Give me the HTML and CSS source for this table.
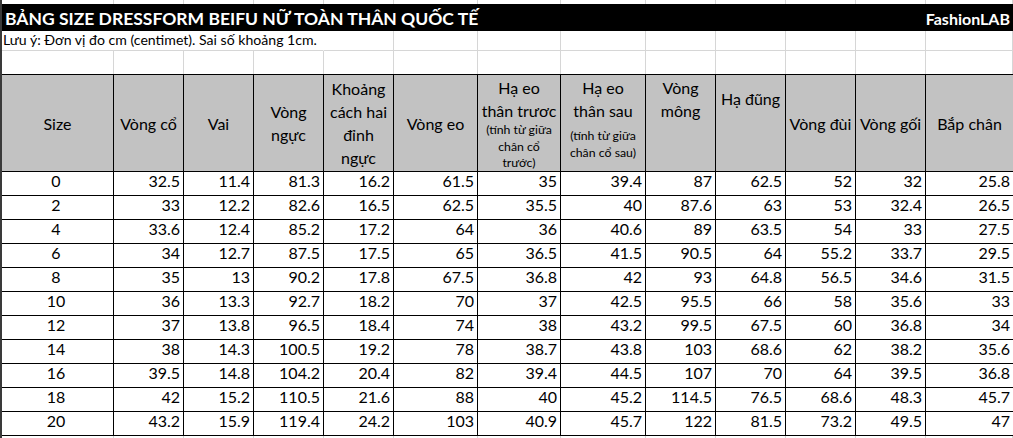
FILE: index.html
```html
<!DOCTYPE html>
<html lang="vi">
<head>
<meta charset="utf-8">
<title>Bảng size dressform Beifu</title>
<link rel="stylesheet" href="styles.css">
</head>
<body>
<div class="sheet">
  <div class="cols row-top">
    <div class="g"></div><div class="g"></div><div class="g"></div><div class="g"></div><div class="g"></div><div class="g"></div><div class="g"></div><div class="g"></div><div class="g"></div><div class="g"></div><div class="g"></div><div class="g"></div><div class="g"></div>
  </div>
  <div class="title-row">
    <h1 class="title">BẢNG SIZE DRESSFORM BEIFU NỮ TOÀN THÂN QUỐC TẾ</h1>
    <span class="brand">FashionLAB</span>
  </div>
  <div class="cols row-note">
    <div class="g note">Lưu ý: Đơn vị đo cm (centimet). Sai số khoảng 1cm.</div><div class="g"></div><div class="g"></div><div class="g"></div><div class="g"></div><div class="g"></div><div class="g"></div><div class="g"></div><div class="g"></div><div class="g"></div>
  </div>
  <div class="cols row-blank">
    <div class="g"></div><div class="g"></div><div class="g"></div><div class="g"></div><div class="g"></div><div class="g"></div><div class="g"></div><div class="g"></div><div class="g"></div><div class="g"></div><div class="g"></div><div class="g"></div><div class="g"></div>
  </div>

  <div class="cols table">
    <div class="th mid">Size</div>
    <div class="th mid">Vòng cổ</div>
    <div class="th mid">Vai</div>
    <div class="th mid">Vòng<br>ngực</div>
    <div class="th mid">Khoảng<br>cách hai<br>đỉnh<br>ngực</div>
    <div class="th mid">Vòng eo</div>
    <div class="th top">Hạ eo<br>thân trươc<span class="small">(tính từ giữa<br>chân cổ<br>trước)</span></div>
    <div class="th top">Hạ eo<br>thân sau<span class="small gap">(tính từ giữa<br>chân cổ sau)</span></div>
    <div class="th top">Vòng<br>mông</div>
    <div class="th top drop">Hạ đũng</div>
    <div class="th mid">Vòng đùi</div>
    <div class="th mid">Vòng gối</div>
    <div class="th mid last">Bắp chân</div>

    <div class="td size">0</div><div class="td">32.5</div><div class="td">11.4</div><div class="td">81.3</div><div class="td">16.2</div><div class="td">61.5</div><div class="td">35</div><div class="td">39.4</div><div class="td">87</div><div class="td">62.5</div><div class="td">52</div><div class="td">32</div><div class="td last">25.8</div>
    <div class="td size">2</div><div class="td">33</div><div class="td">12.2</div><div class="td">82.6</div><div class="td">16.5</div><div class="td">62.5</div><div class="td">35.5</div><div class="td">40</div><div class="td">87.6</div><div class="td">63</div><div class="td">53</div><div class="td">32.4</div><div class="td last">26.5</div>
    <div class="td size">4</div><div class="td">33.6</div><div class="td">12.4</div><div class="td">85.2</div><div class="td">17.2</div><div class="td">64</div><div class="td">36</div><div class="td">40.6</div><div class="td">89</div><div class="td">63.5</div><div class="td">54</div><div class="td">33</div><div class="td last">27.5</div>
    <div class="td size">6</div><div class="td">34</div><div class="td">12.7</div><div class="td">87.5</div><div class="td">17.5</div><div class="td">65</div><div class="td">36.5</div><div class="td">41.5</div><div class="td">90.5</div><div class="td">64</div><div class="td">55.2</div><div class="td">33.7</div><div class="td last">29.5</div>
    <div class="td size">8</div><div class="td">35</div><div class="td">13</div><div class="td">90.2</div><div class="td">17.8</div><div class="td">67.5</div><div class="td">36.8</div><div class="td">42</div><div class="td">93</div><div class="td">64.8</div><div class="td">56.5</div><div class="td">34.6</div><div class="td last">31.5</div>
    <div class="td size">10</div><div class="td">36</div><div class="td">13.3</div><div class="td">92.7</div><div class="td">18.2</div><div class="td">70</div><div class="td">37</div><div class="td">42.5</div><div class="td">95.5</div><div class="td">66</div><div class="td">58</div><div class="td">35.6</div><div class="td last">33</div>
    <div class="td size">12</div><div class="td">37</div><div class="td">13.8</div><div class="td">96.5</div><div class="td">18.4</div><div class="td">74</div><div class="td">38</div><div class="td">43.2</div><div class="td">99.5</div><div class="td">67.5</div><div class="td">60</div><div class="td">36.8</div><div class="td last">34</div>
    <div class="td size">14</div><div class="td">38</div><div class="td">14.3</div><div class="td">100.5</div><div class="td">19.2</div><div class="td">78</div><div class="td">38.7</div><div class="td">43.8</div><div class="td">103</div><div class="td">68.6</div><div class="td">62</div><div class="td">38.2</div><div class="td last">35.6</div>
    <div class="td size">16</div><div class="td">39.5</div><div class="td">14.8</div><div class="td">104.2</div><div class="td">20.4</div><div class="td">82</div><div class="td">39.4</div><div class="td">44.5</div><div class="td">107</div><div class="td">70</div><div class="td">64</div><div class="td">39.5</div><div class="td last">36.8</div>
    <div class="td size">18</div><div class="td">42</div><div class="td">15.2</div><div class="td">110.5</div><div class="td">21.6</div><div class="td">88</div><div class="td">40</div><div class="td">45.2</div><div class="td">114.5</div><div class="td">76.5</div><div class="td">68.6</div><div class="td">48.3</div><div class="td last">45.7</div>
    <div class="td size">20</div><div class="td">43.2</div><div class="td">15.9</div><div class="td">119.4</div><div class="td">24.2</div><div class="td">103</div><div class="td">40.9</div><div class="td">45.7</div><div class="td">122</div><div class="td">81.5</div><div class="td">73.2</div><div class="td">49.5</div><div class="td last">47</div>
  </div>
  <div class="cols row-tail">
    <div class="g"></div><div class="g"></div><div class="g"></div><div class="g"></div><div class="g"></div><div class="g"></div><div class="g"></div><div class="g"></div><div class="g"></div><div class="g"></div><div class="g"></div><div class="g"></div><div class="g"></div>
  </div>
</div>
</body>
</html>
```

FILE: styles.css
```css
html, body {
  margin: 0;
  padding: 0;
  overflow: hidden;
  background: #ffffff;
}

.sheet {
  width: 1011px;
  height: 438px;
  border-left: 2px solid #3a3a3a;
  font-family: Lato, "Open Sans", sans-serif;
  color: #000;
  overflow: hidden;
}

.cols {
  display: grid;
  grid-template-columns: 112px 70px 70px 70px 70px 84px 83px 85px 70px 70px 70px 70px 1fr;
}

.g {
  border-right: 1px solid #d6d6d6;
  box-sizing: border-box;
}

.row-top { height: 4px; }

.title-row {
  height: 27px;
  background: #000;
  color: #fff;
  display: flex;
  align-items: flex-end;
  justify-content: space-between;
  padding: 0 3px 0 3px;
  box-sizing: border-box;
}

.title {
  margin: 0;
  font-size: 17.5px;
  font-weight: 700;
  line-height: 24px;
  letter-spacing: 0;
}

.brand {
  font-size: 16px;
  font-weight: 700;
  line-height: 24px;
}

.row-note { height: 20px; }
.row-note .g { border-bottom: 1px solid #d6d6d6; }
.note {
  grid-column: span 4;
  font-size: 14.1px;
  line-height: 18px;
  padding-left: 1px;
  white-space: nowrap;
  border-right-color: transparent !important;
}

.row-blank { height: 23px; }

.table {
  border-top: 1px solid #000;
  grid-auto-rows: 24px;
  grid-template-rows: 97px;
}

.th {
  background: #c2c2c2;
  border-right: 1px solid #000;
  border-bottom: 1px solid #000;
  box-sizing: border-box;
  text-align: center;
  font-size: 16px;
  line-height: 23px;
  display: flex;
  flex-direction: column;
  align-items: center;
}

.th.mid { justify-content: center; }
.th.top { justify-content: flex-start; padding-top: 1px; }
.th.drop { padding-top: 12px; }

.small {
  display: block;
  font-size: 12.3px;
  line-height: 16.5px;
}
.small.gap { margin-top: 6px; }

.td {
  border-right: 1px solid #000;
  border-bottom: 1px solid #000;
  box-sizing: border-box;
  font-size: 16px;
  line-height: 17px;
  text-align: right;
  padding-right: 3px;
}

.td.size { text-align: center; }

.last { border-right: none; }

.row-tail { height: 20px; }
```
